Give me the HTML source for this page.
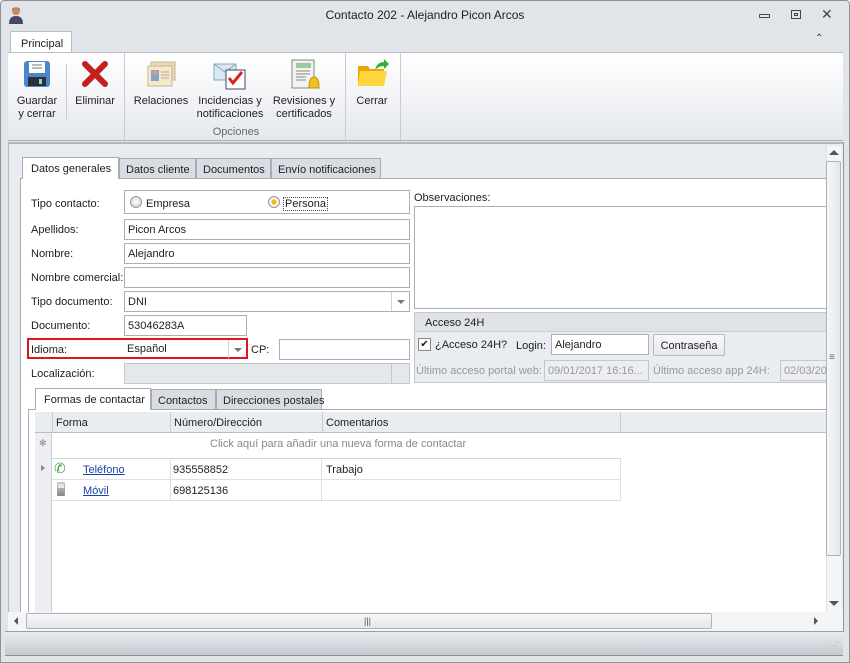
<!DOCTYPE html>
<html><head><meta charset="utf-8"><style>
*{box-sizing:border-box;margin:0;padding:0}
body{width:850px;height:663px;overflow:hidden;background:#fff;font-family:"Liberation Sans",sans-serif;font-size:11px;color:#1e1e1e;position:relative}
.a{position:absolute}
.inp{position:absolute;background:#fff;border:1px solid #abb0b8;height:21px;padding:4px 3px 2px;font-size:11px;white-space:nowrap;overflow:hidden}
.lbl{position:absolute;font-size:11px;white-space:nowrap;margin-top:1px}
.tab{position:absolute;height:21px;border:1px solid #a7acb4;background:#d9dde3;padding:5px 6px 3px;font-size:11px;white-space:nowrap}
.tab.on{background:#fff;border-bottom:none;height:22px}
.gl{position:absolute;background:#c8ccd2}
.rib{position:absolute;text-align:center;font-size:11px;line-height:13px;color:#222}
.dd{position:absolute;right:0;top:0;width:18px;height:19px;border-left:1px solid #d0d3d8}
.dd:after{content:"";position:absolute;left:5px;top:8px;border:4px solid transparent;border-top:4px solid #777;border-bottom:none}
</style></head><body>
<div class="a" style="left:0;top:0;width:850px;height:663px;background:#e1e5ea;border:1px solid #8a929c;border-radius:4px 4px 0 0"></div>
<div class="a" style="left:8px;top:6px;width:16px;height:18px">
<svg width="16" height="18"><circle cx="8" cy="5" r="4" fill="#c98a5a"/><path d="M4 4 Q8 -1 12 4 L12 3 Q8 0 4 3Z" fill="#5a3a20"/><path d="M1 18 Q1 10 8 10 Q15 10 15 18Z" fill="#3a4a70"/><path d="M7 10 L9 10 L8.5 16 L7.5 16Z" fill="#c22"/></svg></div>
<div class="a" style="left:0;top:8px;width:850px;text-align:center;font-size:12px">Contacto 202 - Alejandro Picon Arcos</div>
<div class="a" style="left:759px;top:14px;width:11px;height:4px;border:1px solid #444;border-radius:1px"></div>
<div class="a" style="left:791px;top:10px;width:10px;height:9px;border:1px solid #444"><div style="margin:2px;height:3px;border:1px solid #444"></div></div>
<div class="a" style="left:821px;top:6px;font-size:14px;color:#444">✕</div>
<div class="a" style="left:815px;top:33px;font-size:10px;color:#333">⌃</div>
<div class="a" style="left:10px;top:31px;width:62px;height:22px;background:#fff;border:1px solid #b6bcc4;border-bottom:none;border-radius:2px 2px 0 0;padding:6px 0 0 10px">Principal</div>
<div class="a" style="left:8px;top:52px;width:835px;height:89px;background:linear-gradient(#fff,#e5e8ed);border-top:1px solid #b6bcc4;border-bottom:1px solid #a9aeb6"></div>
<div class="a" style="left:66px;top:64px;width:1px;height:55px;background:#c8ccd2"></div>
<div class="a" style="left:124px;top:53px;width:1px;height:87px;background:#c8ccd2"></div>
<div class="a" style="left:345px;top:53px;width:1px;height:87px;background:#c8ccd2"></div>
<div class="a" style="left:400px;top:53px;width:1px;height:87px;background:#c8ccd2"></div>
<svg class="a" style="left:23px;top:60px" width="28" height="28"><rect x="1" y="1" width="26" height="26" rx="3" fill="#4a86c8"/><rect x="6" y="2" width="16" height="11" fill="#fff"/><path d="M9 5h10M9 8h10" stroke="#777"/><rect x="5" y="17" width="18" height="9" fill="#2b2f38"/><rect x="16" y="19" width="3" height="5" fill="#9cc"/></svg>
<svg class="a" style="left:82px;top:61px" width="26" height="26"><path d="M3 3L23 23M23 3L3 23" stroke="#c21f1f" stroke-width="6" stroke-linecap="round"/></svg>
<svg class="a" style="left:145px;top:60px" width="32" height="30"><rect x="6" y="2" width="24" height="18" fill="#e8d8b8" stroke="#c9b48c"/><rect x="3" y="6" width="24" height="20" fill="#f4e8c8" stroke="#c9b48c"/><rect x="6" y="10" width="8" height="11" fill="#7da6d2"/><circle cx="10" cy="13" r="2.5" fill="#d9a070"/><path d="M16 12h8M16 15h8M16 18h8" stroke="#aaa"/></svg>
<svg class="a" style="left:213px;top:58px" width="34" height="32"><path d="M1 6h22v16H1z" fill="#d8e8f6" stroke="#8aa"/><path d="M1 6l11 8 11-8" fill="none" stroke="#8aa"/><rect x="13" y="12" width="19" height="19" fill="#fff" stroke="#446"/><path d="M16 20l4 5 9-11" stroke="#d22" stroke-width="3" fill="none"/></svg>
<svg class="a" style="left:289px;top:59px" width="32" height="32"><rect x="3" y="1" width="22" height="28" fill="#f2f2f2" stroke="#888"/><rect x="7" y="4" width="15" height="5" fill="#9ec89e"/><path d="M7 12h14M7 15h14M7 18h10M7 21h10" stroke="#888"/><path d="M20 29q0-11 5-11t5 11z" fill="#f2c020" stroke="#c09010"/></svg>
<svg class="a" style="left:357px;top:58px" width="32" height="30"><path d="M1 8h10l2 3h14v17H1z" fill="#e8a800"/><path d="M3 13h27l-3 15H1z" fill="#ffd640"/><path d="M18 12q2-8 9-8v-3l5 5-5 5v-3q-5 0-9 4z" fill="#30b030"/></svg>
<div class="rib" style="left:12px;top:95px;width:50px">Guardar<br>y cerrar</div>
<div class="rib" style="left:68px;top:95px;width:54px">Eliminar</div>
<div class="rib" style="left:129px;top:95px;width:64px">Relaciones</div>
<div class="rib" style="left:192px;top:95px;width:76px">Incidencias y<br>notificaciones</div>
<div class="rib" style="left:268px;top:95px;width:72px">Revisiones y<br>certificados</div>
<div class="rib" style="left:350px;top:95px;width:44px">Cerrar</div>
<div class="rib" style="left:200px;top:126px;width:72px;color:#666">Opciones</div>
<div class="a" style="left:8px;top:142px;width:835px;height:490px;background:#e8ebef;border-top:2px solid #b3b8bf;border-left:1px solid #b3b8bf"></div>
<div class="tab on" style="left:22px;top:157px;width:97px;padding-left:8px">Datos generales</div>
<div class="tab" style="left:119px;top:158px;width:77px">Datos cliente</div>
<div class="tab" style="left:196px;top:158px;width:75px">Documentos</div>
<div class="tab" style="left:271px;top:158px;width:110px">Envío notificaciones</div>
<div class="a" style="left:20px;top:178px;width:806px;height:434px;background:#fff;border-left:1px solid #a7acb4;border-top:1px solid #a7acb4"></div>
<div class="a" style="left:23px;top:178px;width:95px;height:2px;background:#fff"></div>
<div class="lbl" style="left:31px;top:197px">Tipo contacto:</div>
<div class="inp" style="left:124px;top:190px;width:286px;height:24px"></div>
<div class="a" style="left:130px;top:196px;width:12px;height:12px;border-radius:50%;border:1px solid #999;background:radial-gradient(#fff,#ccc)"></div>
<div class="lbl" style="left:146px;top:197px">Empresa</div>
<div class="a" style="left:268px;top:196px;width:12px;height:12px;border-radius:50%;border:1px solid #999;background:radial-gradient(#f3b800 30%,#fff 45%,#ccc)"></div>
<div class="lbl" style="left:283px;top:196px;border:1px dotted #444;padding:0 1px">Persona</div>
<div class="lbl" style="left:31px;top:223px">Apellidos:</div>
<div class="inp" style="left:124px;top:219px;width:286px">Picon Arcos</div>
<div class="lbl" style="left:31px;top:247px">Nombre:</div>
<div class="inp" style="left:124px;top:243px;width:286px">Alejandro</div>
<div class="lbl" style="left:31px;top:271px">Nombre comercial:</div>
<div class="inp" style="left:124px;top:267px;width:286px"></div>
<div class="lbl" style="left:31px;top:295px">Tipo documento:</div>
<div class="inp" style="left:124px;top:291px;width:286px">DNI<div class="dd"></div></div>
<div class="lbl" style="left:31px;top:319px">Documento:</div>
<div class="inp" style="left:124px;top:315px;width:123px">53046283A</div>
<div class="a" style="left:27px;top:338px;width:221px;height:21px;border:2px solid #e0141b"></div>
<div class="lbl" style="left:31px;top:343px">Idioma:</div>
<div class="a" style="left:124px;top:340px;width:122px;height:18px;padding:3px 3px">Español<div class="dd" style="height:18px;top:0"></div></div>
<div class="lbl" style="left:251px;top:343px">CP:</div>
<div class="inp" style="left:279px;top:339px;width:131px"></div>
<div class="lbl" style="left:31px;top:367px">Localización:</div>
<div class="inp" style="left:124px;top:363px;width:286px;background:#e4e7ec;border-color:#c4c8ce"><div style="position:absolute;right:0;top:0;width:18px;height:19px;border-left:1px solid #c4c8ce"></div></div>
<div class="lbl" style="left:414px;top:191px">Observaciones:</div>
<div class="a" style="left:414px;top:206px;width:413px;height:103px;border:1px solid #abb0b8;border-right:none"></div>
<div class="a" style="left:414px;top:312px;width:412px;height:71px;background:#e9ecf0;border:1px solid #c4c8ce;border-right:none"></div>
<div class="a" style="left:415px;top:313px;width:411px;height:19px;background:#dfe3e8;border-bottom:1px solid #c8ccd2"></div>
<div class="lbl" style="left:425px;top:316px">Acceso 24H</div>
<div class="a" style="left:418px;top:338px;width:13px;height:13px;border:1px solid #888;background:#fff;font-size:10px;line-height:11px;text-align:center">✔</div>
<div class="lbl" style="left:435px;top:338px">¿Acceso 24H?</div>
<div class="lbl" style="left:516px;top:339px">Login:</div>
<div class="inp" style="left:551px;top:334px;width:98px">Alejandro</div>
<div class="a" style="left:653px;top:334px;width:72px;height:22px;border:1px solid #b4b9c0;border-radius:2px;background:linear-gradient(#f7f8fa,#e6e9ed);text-align:center;padding-top:5px">Contraseña</div>
<div class="lbl" style="left:416px;top:364px;color:#999">Último acceso portal web:</div>
<div class="inp" style="left:544px;top:360px;width:105px;background:#eceef1;color:#999;border-color:#c4c8ce">09/01/2017 16:16...</div>
<div class="lbl" style="left:653px;top:364px;color:#999">Último acceso app 24H:</div>
<div class="inp" style="left:780px;top:360px;width:47px;background:#eceef1;color:#999;border-color:#c4c8ce;border-right:none">02/03/20</div>
<div class="tab on" style="left:35px;top:388px;width:116px;padding-left:8px">Formas de contactar</div>
<div class="tab" style="left:151px;top:389px;width:65px">Contactos</div>
<div class="tab" style="left:216px;top:389px;width:106px">Direcciones postales</div>
<div class="a" style="left:28px;top:409px;width:798px;height:203px;border-left:1px solid #a7acb4;border-top:1px solid #a7acb4"></div>
<div class="a" style="left:36px;top:409px;width:114px;height:2px;background:#fff"></div>
<div class="a" style="left:35px;top:412px;width:791px;height:200px;border-left:1px solid #c4c8ce"></div>
<div class="a" style="left:35px;top:412px;width:791px;height:21px;background:#e9ecf0;border-bottom:1px solid #b8bdc4"></div>
<div class="gl" style="left:52px;top:412px;width:1px;height:21px"></div>
<div class="gl" style="left:170px;top:412px;width:1px;height:21px"></div>
<div class="gl" style="left:322px;top:412px;width:1px;height:21px"></div>
<div class="gl" style="left:620px;top:412px;width:1px;height:21px"></div>
<div class="lbl" style="left:56px;top:416px">Forma</div>
<div class="lbl" style="left:174px;top:416px">Número/Dirección</div>
<div class="lbl" style="left:326px;top:416px">Comentarios</div>
<div class="a" style="left:35px;top:433px;width:17px;height:179px;background:#eceef1;border-right:1px solid #c8ccd2"></div>
<div class="lbl" style="left:39px;top:437px;font-size:9px;color:#888">✻</div>
<div class="lbl" style="left:210px;top:437px;color:#888">Click aquí para añadir una nueva forma de contactar</div>
<div class="gl" style="left:52px;top:458px;width:569px;height:1px;background:#d0d4da"></div>
<div class="gl" style="left:52px;top:479px;width:569px;height:1px;background:#dcdfe3"></div>
<div class="gl" style="left:52px;top:500px;width:569px;height:1px;background:#dcdfe3"></div>
<div class="gl" style="left:170px;top:458px;width:1px;height:42px;background:#dcdfe3"></div>
<div class="gl" style="left:321px;top:458px;width:1px;height:42px;background:#dcdfe3"></div>
<div class="gl" style="left:620px;top:458px;width:1px;height:42px;background:#dcdfe3"></div>
<div class="a" style="left:41px;top:465px;border:3px solid transparent;border-left:4px solid #888;border-right:none"></div>
<div class="lbl" style="left:54px;top:459px;color:#3a3;font-size:14px">✆</div>
<div class="lbl" style="left:83px;top:463px;color:#1a3fa8;text-decoration:underline">Teléfono</div>
<div class="lbl" style="left:173px;top:463px">935558852</div>
<div class="lbl" style="left:326px;top:463px">Trabajo</div>
<div class="a" style="left:57px;top:482px;width:8px;height:14px;background:linear-gradient(#ccc,#888);border-radius:1px"><div style="margin:2px 1px;height:4px;background:#dfe8ef"></div></div>
<div class="lbl" style="left:83px;top:484px;color:#1a3fa8;text-decoration:underline">Móvil</div>
<div class="lbl" style="left:173px;top:484px">698125136</div>
<div class="a" style="left:826px;top:146px;width:16px;height:466px;background:#f4f5f7;border-left:1px solid #e0e2e6"></div>
<div class="a" style="left:829px;top:150px;border:5px solid transparent;border-bottom:5px solid #555;border-top:none"></div>
<div class="a" style="left:826px;top:161px;width:15px;height:395px;background:linear-gradient(90deg,#f6f7f8,#e4e6e9);border:1px solid #aeb3ba;border-radius:2px"></div>
<div class="lbl" style="left:829px;top:351px;font-size:10px;color:#666">≡</div>
<div class="a" style="left:829px;top:601px;border:5px solid transparent;border-top:5px solid #555;border-bottom:none"></div>
<div class="a" style="left:843px;top:142px;width:1px;height:490px;background:#8f969e"></div>
<div class="a" style="left:8px;top:612px;width:835px;height:19px;background:#f4f5f7"></div>
<div class="a" style="left:14px;top:617px;border:4px solid transparent;border-right:4px solid #555;border-left:none"></div>
<div class="a" style="left:26px;top:613px;width:686px;height:16px;background:linear-gradient(#f6f7f8,#e4e6e9);border:1px solid #aeb3ba;border-radius:2px"></div>
<div class="lbl" style="left:364px;top:615px;font-size:9px;color:#555">|||</div>
<div class="a" style="left:814px;top:617px;border:4px solid transparent;border-left:4px solid #555;border-right:none"></div>
<div class="a" style="left:5px;top:631px;width:838px;height:25px;background:linear-gradient(#e9ebef,#c5c9cf);border-top:1px solid #9aa0a8;border-bottom:1px solid #8a9098"></div>
<div class="lbl" style="left:830px;top:640px;font-size:8px;color:#999">⋰</div>
</body></html>
